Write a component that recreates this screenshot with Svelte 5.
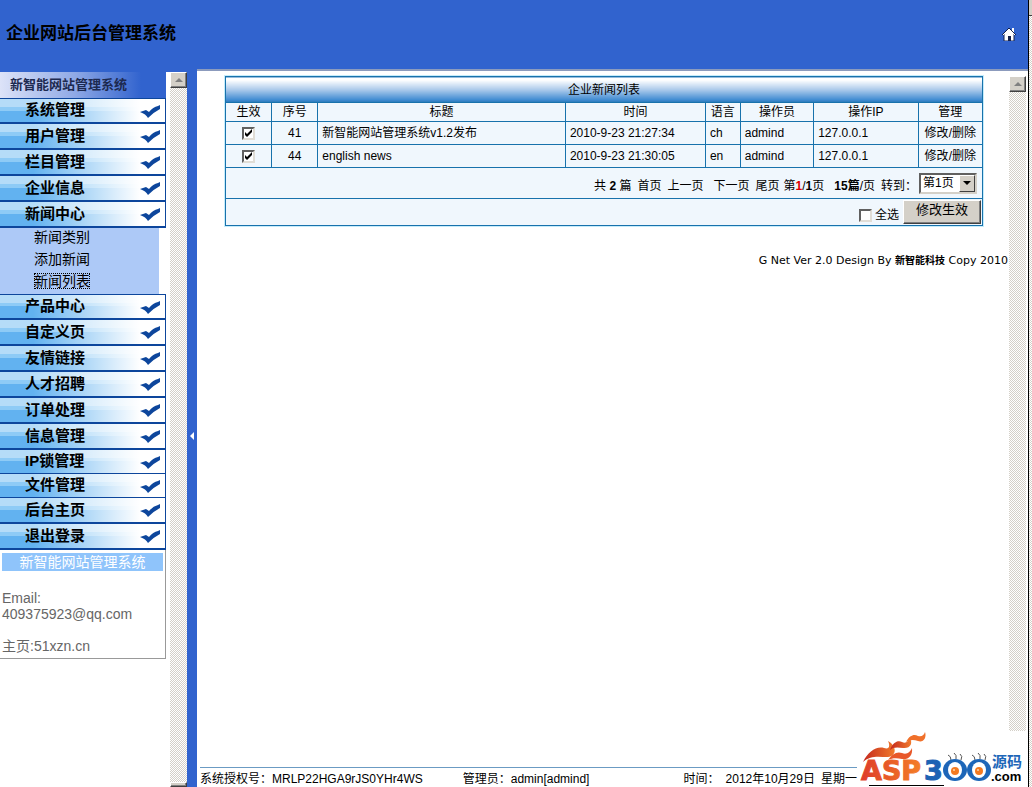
<script>
  const menu = [
    { label: '系统管理' },
    { label: '用户管理' },
    { label: '栏目管理' },
    { label: '企业信息' },
    { label: '新闻中心', children: ['新闻类别', '添加新闻', '新闻列表'] },
    { label: '产品中心' },
    { label: '自定义页' },
    { label: '友情链接' },
    { label: '人才招聘' },
    { label: '订单处理' },
    { label: '信息管理' },
    { label: 'IP锁管理', slim: true },
    { label: '文件管理', slim: true },
    { label: '后台主页' },
    { label: '退出登录' }
  ];
  let rows = $state([
    { on: true, id: 41, title: '新智能网站管理系统v1.2发布', time: '2010-9-23 21:27:34', lang: 'ch' },
    { on: true, id: 44, title: 'english news', time: '2010-9-23 21:30:05', lang: 'en' }
  ]);
  let all = $state(false);
  function toggleAll() {
    for (const r of rows) r.on = all;
  }
</script>

<div class="app">
  <div class="window">
    <header>
      <h1>企业网站后台管理系统</h1>
      <a class="home" href="#home" aria-label="首页">
        <svg width="14" height="14" viewBox="0 0 14 14">
          <path d="M10 1h2v6h-2z" fill="#fff" />
          <path d="M2 7L7 2l5 5v7H2z" fill="#fff" stroke="#14204a" stroke-width="1" />
          <path d="M0 8L7 1l7 7" fill="none" stroke="#14204a" stroke-width="1" />
          <path d="M1 8L7 2l6 6" fill="none" stroke="#fff" stroke-width="1" />
          <path d="M6 9h3v5H6z" fill="#14204a" />
        </svg>
      </a>
    </header>

    <div class="body">
      <aside>
        <div class="brand">新智能网站管理系统</div>
        <nav>
          {#each menu as m}
            <a class="item" class:slim={m.slim} href="#menu">
              <span>{m.label}</span>
              <svg width="20" height="14" viewBox="0 0 20 14">
                <path d="M0 7L6 5L9 7Q13 2 18 1L20 0L20 4Q14 7 8 13Q6 9 0 7Z" fill="#0d469c" />
              </svg>
            </a>
            {#if m.children}
              <div class="sub">
                {#each m.children as c, i}
                  <a href="#sub"><span class:focused={i === 2}>{c}</span></a>
                {/each}
              </div>
            {/if}
          {/each}
        </nav>
        <div class="info">
          <h2>新智能网站管理系统</h2>
          <p>Email:<br />409375923@qq.com</p>
          <p>主页:51xzn.cn</p>
        </div>
      </aside>

      <div class="track left">
        <button aria-label="向上滚动"><i class="up"></i></button>
        <button aria-label="向下滚动" class="end"></button>
      </div>
      <button class="splitter" aria-label="收起菜单"><i></i></button>

      <div class="right">
        <div class="pane">
          <main>
            <table>
              <colgroup>
                <col style:width="6.1%" /><col style:width="6.1%" /><col style:width="32.7%" />
                <col style:width="18.5%" /><col style:width="4.6%" /><col style:width="9.7%" />
                <col style:width="13.8%" /><col style:width="8.5%" />
              </colgroup>
              <thead>
                <tr class="caption"><th colspan="8">企业新闻列表</th></tr>
                <tr class="heads">
                  <th>生效</th><th>序号</th><th>标题</th><th>时间</th>
                  <th>语言</th><th>操作员</th><th>操作IP</th><th>管理</th>
                </tr>
              </thead>
              <tbody>
                {#each rows as r}
                  <tr class="row">
                    <td class="c"><input type="checkbox" aria-label="生效" bind:checked={r.on} /></td>
                    <td class="c">{r.id}</td>
                    <td>{r.title}</td>
                    <td>{r.time}</td>
                    <td>{r.lang}</td>
                    <td>admind</td>
                    <td>127.0.0.1</td>
                    <td class="c"><a href="#edit">修改</a>/<a href="#delete">删除</a></td>
                  </tr>
                {/each}
              </tbody>
              <tfoot>
                <tr>
                  <td colspan="8">
                    <div class="pager">
                      <span>共 <b>2</b> 篇</span>
                      <a href="#first">首页</a>
                      <a href="#prev">上一页</a>
                      <a href="#next" class="next">下一页</a>
                      <a href="#last">尾页</a>
                      <span class="at">第<b class="red">1</b>/<b>1</b>页</span>
                      <span class="per"><b>15篇</b>/页</span>
                      <label for="jump">转到：</label>
                      <span class="combo">
                        <select id="jump"><option>第1页</option></select>
                        <i class="drop"></i>
                      </span>
                    </div>
                  </td>
                </tr>
                <tr>
                  <td colspan="8">
                    <div class="actions">
                      <label><input type="checkbox" bind:checked={all} onchange={toggleAll} />全选</label>
                      <button>修改生效</button>
                    </div>
                  </td>
                </tr>
              </tfoot>
            </table>
            <p class="copy">G Net Ver 2.0 Design By <b>新智能科技</b> Copy 2010</p>
          </main>
          <div class="track">
            <button aria-label="向上滚动"><i class="up"></i></button>
          </div>
        </div>
        <footer>
          <span class="lic">系统授权号：MRLP22HGA9rJS0YHr4WS</span>
          <span>管理员：admin[admind]</span>
          <span class="date"><span>时间：</span><span>2012年10月29日</span><span>星期一</span></span>
        </footer>
      </div>
    </div>

    <svg class="logo" width="168" height="56" viewBox="0 0 168 56" role="img" aria-label="ASP300源码.com">
      <defs>
        <linearGradient id="flame" x1="0" x2="1"><stop offset="0" stop-color="#c4281e" /><stop offset="1" stop-color="#f07a2c" /></linearGradient>
        <linearGradient id="word" gradientUnits="userSpaceOnUse" x1="0" x2="64" y1="0" y2="0"><stop offset="0" stop-color="#de3c2a" /><stop offset="1" stop-color="#f58226" /></linearGradient>
      </defs>
      <path d="M3 31C8 21 16 15 24 17C30 19 30 14 28 10C37 15 37 25 28 26C18 26 11 24 3 31Z" fill="url(#flame)" />
      <path d="M30 19C33 11 38 9 42 11C46 13 49 10 49 6C54 12 50 18 43 17C37 16 33 16 30 19Z" fill="url(#flame)" />
      <path d="M46 11C50 4 54 3 58 5C62 6 64 4 65 1C67 7 63 12 58 10C53 8 49 9 46 11Z" fill="#f0702a" />
      <path d="M28 29C32 23 37 20 42 22C47 24 50 21 52 17C53 25 48 29 42 28C37 27 32 27 28 29Z" fill="#e8582a" />
      <text x="1" y="49" class="asp" fill="url(#word)" stroke="url(#word)">ASP</text>
      <text x="64" y="49" class="asp" fill="#1c62b4" stroke="#1c62b4">3</text>
      <path d="M91 29q0-4-3-5M96 28q1-4-2-6M101 29q2-4-1-6M115 29q0-4-3-5M120 28q1-4-2-6M125 29q2-4-1-6" fill="none" stroke="#555" />
      <ellipse cx="95" cy="39" rx="12" ry="11" fill="#1d66b8" />
      <ellipse cx="95" cy="39" rx="7" ry="8" fill="#fff" />
      <circle cx="95" cy="40" r="4" fill="#f47a20" />
      <circle cx="94" cy="39" r="1" fill="#ffd9a8" />
      <ellipse cx="119" cy="39" rx="12" ry="11" fill="#1d66b8" />
      <ellipse cx="119" cy="39" rx="7" ry="8" fill="#fff" />
      <circle cx="119" cy="40" r="4" fill="#f47a20" />
      <circle cx="118" cy="39" r="1" fill="#ffd9a8" />
      <text x="132" y="36" class="yuan">源码</text>
      <text x="131" y="50" class="com">.com</text>
      <path d="M9 54.5h75" stroke="#000" />
    </svg>
  </div>
  <div class="edge"><div></div></div>
</div>

<style>
  :global(html), :global(body), :global(#app) { height: 100%; }
  :global(body) { margin: 0; overflow: hidden; }
  .app {
    display: flex; height: 100%; background: #fff; color: #000;
    font: 12px/16px "Liberation Sans", "Noto Sans CJK SC", sans-serif;
  }
  a { color: inherit; text-decoration: none; }
  h1, h2, p { margin: 0; }
  .window { flex: 1; min-width: 0; display: flex; flex-direction: column; position: relative; }
  header {
    height: 72px; box-sizing: border-box; flex: none; background: #3163ce;
    display: flex; align-items: center; justify-content: space-between; padding: 0 12px 5px 6px;
  }
  h1 { font-size: 17px; line-height: 24px; }
  .home { display: flex; }
  .body { flex: 1; display: flex; min-height: 0; }
  aside { width: 166px; flex: none; }
  .brand {
    height: 26px; box-sizing: border-box; padding-left: 10px; line-height: 26px; font-size: 13px; font-weight: bold; color: #1d2a50;
    background: linear-gradient(90deg, #dde3f8, #8fa9e6 45%, #3163ce 85%);
  }
  nav { display: flex; flex-direction: column; }
  .item {
    height: 26px; box-sizing: border-box; display: flex; align-items: center; justify-content: space-between;
    padding: 0 5px 0 25px; border-bottom: 2px solid #0d469c; border-right: 1px solid #0d469c; font-size: 15px; line-height: 22px; font-weight: bold;
    background:
      linear-gradient(90deg, transparent 20%, #fff 85%),
      linear-gradient(#b5dcf8 0 35%, #8ecbf6 35% 50%, #62b2f0 50%);
  }
  .item:first-child, .sub + .item { border-top: 1px solid #0d469c; }
  .item span { padding-bottom: 1px; }
  .item svg { margin-top: 2px; }
  .slim { height: 24px; border-bottom-width: 1px; }
  .sub { margin-right: 7px; background: #adc9f7; padding-left: 34px; font-size: 14px; line-height: 18px; }
  .sub a { display: block; height: 22px; }
  .sub .focused { outline: 1px dotted #000; outline-offset: -1px; }
  .info { border: 1px solid #999; border-left: 0; border-top: 0; padding: 3px 2px 4px; font-size: 14px; color: #666; }
  .info h2 { background: #8fc4fb; color: #fff; font-size: 14px; line-height: 18px; font-weight: normal; text-align: center; }
  .info p { margin-top: 16px; }
  .info h2 + p { margin-top: 19px; }
  .track {
    width: 17px; flex: none; display: flex; flex-direction: column; justify-content: space-between;
    background: repeating-conic-gradient(#d4d0c8 0 25%, #fff 0 50%) 0 0 / 2px 2px;
  }
  .track.left { margin-left: 4px; }
  .track button {
    height: 16px; padding: 0; background: #d4d0c8; border: 1px solid; border-color: #fff #404040 #404040 #fff;
    box-shadow: inset -1px -1px #808080; display: flex; align-items: center; justify-content: center;
  }
  .track .end { height: 5px; }
  .up { border: 4px solid transparent; border-top: 0; border-bottom-color: #808080; }
  .splitter { width: 10px; flex: none; padding: 12px 3px 0; border: 0; background: #3163ce; display: flex; align-items: center; }
  .splitter i { border: 4px solid transparent; border-left: 0; border-right-color: #fff; }
  .right { flex: 1; min-width: 0; display: flex; flex-direction: column; border-top: 2px solid #8c9bbd; margin-top: -3px; background: #fff; }
  .pane { flex: 1; display: flex; padding: 5px 2px 0 0; }
  .pane .track { margin-bottom: 36px; }
  main { flex: 1; min-width: 0; }
  table {
    width: calc(100% - 54px); margin: 0 26px 0 28px; table-layout: fixed; border-collapse: collapse; background: #f0f7fd;
    border: 1px solid #1872ac; box-shadow: 0 0 0 1px #c5ecfb;
  }
  th, td { border: 1px solid #1872ac; padding: 0 4px; font-weight: normal; white-space: nowrap; overflow: hidden; }
  .caption th { height: 25px; background: linear-gradient(#fff 10%, #a9c8ea 50%, #3f8bd2 90%, #2a76b4); }
  .heads th { height: 18px; padding: 0; }
  .row td { height: 22px; }
  td.c { text-align: center; padding: 0; }
  input {
    appearance: none; width: 13px; height: 13px; margin: 0; background: #fff; vertical-align: middle;
    border: 2px solid; border-color: #606060 #e0ddd6 #e0ddd6 #606060; box-sizing: border-box;
  }
  input:checked {
    background: #fff url("data:image/svg+xml,%3Csvg xmlns='http://www.w3.org/2000/svg' viewBox='0 0 9 9'%3E%3Cpath d='M1 3v3l2 2 5-5V0L3 5z' fill='%23000'/%3E%3C/svg%3E") center / 9px 9px no-repeat;
  }
  .pager { height: 30px; display: flex; align-items: center; justify-content: flex-end; gap: 6px; }
  .pager > span:not(.combo), .pager > a, .pager > label { padding-top: 5px; }
  .next { margin-left: 4px; }
  .at { margin-left: -2px; }
  .per { margin-left: 4px; }
  .red { color: #d00; }
  .combo { display: flex; position: relative; margin: 0 1px 0 -4px; }
  select {
    appearance: none; width: 58px; height: 21px; padding: 0 2px; border: 2px solid; border-color: #606060 #d4d0c8 #d4d0c8 #606060;
    border-radius: 0; background: #fff; color: #000; font: inherit;
  }
  .drop {
    position: absolute; right: 2px; top: 2px; width: 14px; height: 15px; background: #d4d0c8;
    border: 1px solid; border-color: #fff #404040 #404040 #fff; pointer-events: none;
  }
  .drop::after { content: ""; position: absolute; left: 3px; top: 5px; border: 4px solid transparent; border-bottom: 0; border-top-color: #000; }
  .actions { height: 26px; display: flex; justify-content: flex-end; gap: 4px; margin-right: -3px; }
  .actions label { display: flex; align-items: center; gap: 3px; padding-top: 6px; }
  .actions button {
    width: 78px; height: 24px; margin-top: 1px; padding: 0 0 4px; background: #d4d0c8; border: 1px solid;
    border-color: #fff #404040 #404040 #fff; box-shadow: inset -1px -1px #808080; font: 13px/16px "Liberation Sans", "Noto Sans CJK SC", sans-serif;
  }
  .copy { margin-top: 27px; text-align: right; padding-right: 1px; font: 11px/16px "DejaVu Sans", "Noto Sans CJK SC", sans-serif; }
  .copy b { font-size: 10px; }
  footer { height: 19px; flex: none; margin: 0 171px 0 3px; border-top: 1px solid #6b9bc3; display: flex; align-items: flex-end; white-space: nowrap; }
  .lic { margin-right: 40px; }
  .date { margin-left: auto; display: flex; gap: 6px; }
  .logo { position: absolute; right: 0; bottom: 0; }
  .asp { font: bold 27px "DejaVu Sans", sans-serif; stroke-width: 1; }
  .yuan { font: bold 15px "Noto Sans CJK SC", sans-serif; fill: #1d66b8; }
  .com { font: bold 13px "Liberation Sans", sans-serif; fill: #000; }
  .edge { width: 3px; flex: none; border-left: 1px solid #000; background: repeating-conic-gradient(#d4d0c8 0 25%, #fff 0 50%) 0 0 / 2px 2px; }
  .edge div { height: 16px; border-bottom: 1px solid #404040; background: #d4d0c8; box-sizing: border-box; }
</style>
